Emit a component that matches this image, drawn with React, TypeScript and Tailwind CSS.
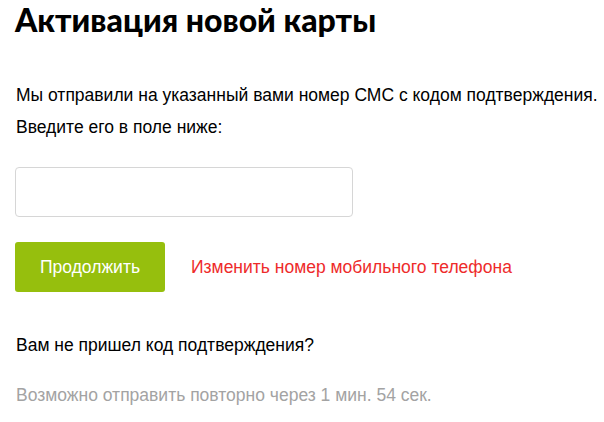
import React from "react";

export default function App() {
  return (
    <div className="w-[604px] h-[422px] bg-white overflow-hidden px-[15px]" style={{ fontFamily: '"Liberation Sans", Arial, sans-serif' }}>
      <h1 className="text-[32px] leading-[40px] font-black text-black" style={{ fontFamily: 'Lato, "Noto Sans", sans-serif' }}>
        Активация новой карты
      </h1>
      <div className="mt-[39px] text-[17.5px] leading-[32px] text-black pl-px whitespace-nowrap">
        <p>Мы отправили на указанный вами номер СМС с кодом подтверждения.</p>
        <p>Введите его в поле ниже:</p>
      </div>
      <input className="mt-[24px] block w-[338px] h-[50px] border border-[#d6d6d6] rounded-[4px] outline-none px-3 text-[16px]" />
      <div className="mt-[25px] flex items-center gap-[26px] whitespace-nowrap">
        <button className="w-[150px] h-[50px] bg-[#96bf0d] rounded-[3px] text-white text-[17.5px]">Продолжить</button>
        <a className="text-[17.5px] text-[#ee2b2b]">Изменить номер мобильного телефона</a>
      </div>
      <p className="mt-[43px] text-[17.5px] leading-[20px] text-black pl-px whitespace-nowrap">Вам не пришел код подтверждения?</p>
      <p className="mt-[30px] text-[17.5px] leading-[20px] text-[#a3a3a3] pl-px whitespace-nowrap">Возможно отправить повторно через 1 мин. 54 сек.</p>
    </div>
  );
}
